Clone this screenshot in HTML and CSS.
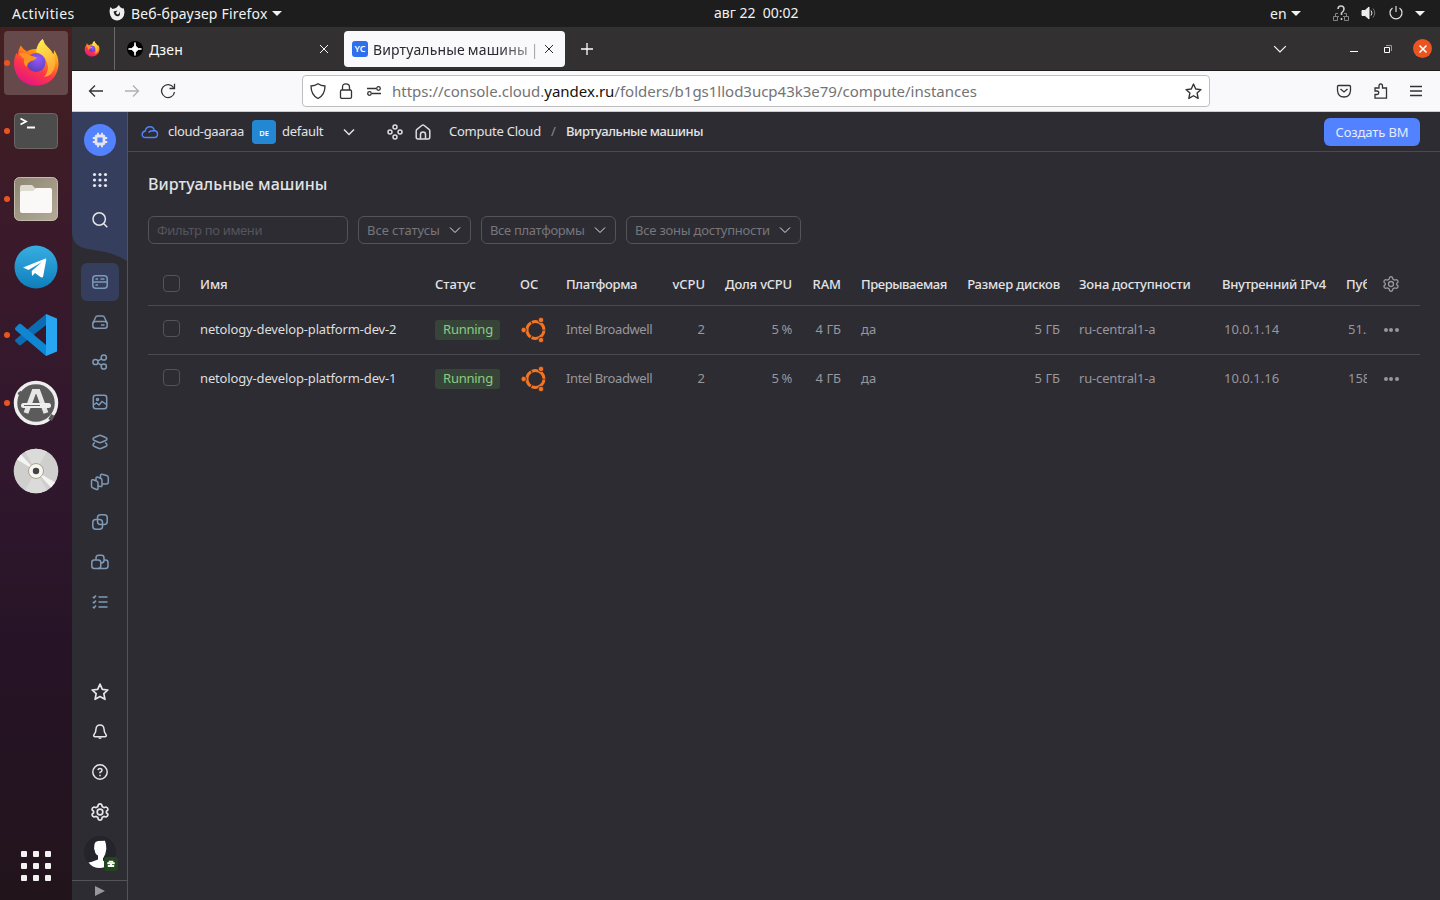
FILE: index.html
```html
<!DOCTYPE html>
<html lang="ru">
<head>
<meta charset="utf-8">
<title>Виртуальные машины</title>
<link rel="stylesheet" href="styles.css">
</head>
<body>
<svg class="defs" width="0" height="0">
  <defs>
    <linearGradient id="ffBody" x1="0.8" y1="0" x2="0.3" y2="1"><stop offset="0" stop-color="#fff44f"/><stop offset=".35" stop-color="#ff980e"/><stop offset=".65" stop-color="#ff3647"/><stop offset="1" stop-color="#e31587"/></linearGradient>
    <linearGradient id="ffFlame" x1="0" y1="0" x2="0.3" y2="1"><stop offset="0" stop-color="#fff44f"/><stop offset="1" stop-color="#ffa436"/></linearGradient>
    <radialGradient id="ffGlobe" cx=".6" cy=".3" r=".8"><stop offset="0" stop-color="#9059ff"/><stop offset="1" stop-color="#5b3cb0"/></radialGradient>
    <linearGradient id="tgFill" x1="0" y1="0" x2="0" y2="1"><stop offset="0" stop-color="#37aee2"/><stop offset="1" stop-color="#0f7ebc"/></linearGradient>
    <linearGradient id="fileFill" x1="0" y1="0" x2="1" y2="1"><stop offset="0" stop-color="#8d8673"/><stop offset="1" stop-color="#b3ab98"/></linearGradient>
  </defs>
  <symbol id="firefox" viewBox="0 0 48 48">
    <path d="M8.700 6.500Q11.500 11 15 12.500Q18 9.500 26 10Q27 3 30.700 0Q32 5 36 8.500Q40 12 40.500 16Q42.500 14 42 11Q46.500 17 46.500 25C46 38 37 46.500 24 46.500C11 46.500 2 36.500 2 24.500Q2 18 5 13.500L5.500 17Q6 11 8.700 6.500Z" fill="url(#ffBody)"/>
    <path d="M24 13Q25 4 30.700 0Q32 5 36 8.500Q45 16 43 27Q41 37 32 38Q38 31 35 24Q34 17 24 13Z" fill="url(#ffFlame)"/>
    <circle cx="24" cy="23.500" r="9.500" fill="url(#ffGlobe)"/>
    <path d="M7 15Q12 12 17 16L25 18.500Q24 21 19 22Q15 24 15 28Q11 26 12 20Z" fill="#ff9322"/>
  </symbol>
  <symbol id="chev" viewBox="0 0 12 12"><path d="M1 3.500L6 8.500L11 3.500" fill="none" stroke="currentColor"/></symbol>
  <symbol id="x" viewBox="0 0 12 12"><path d="M2 2L10 10M10 2L2 10" fill="none" stroke="currentColor"/></symbol>
  <symbol id="star" viewBox="0 0 16 16"><path stroke-linejoin="round" d="M8 1L10.100 5.600L15 6.200L11.400 9.500L12.400 14.500L8 12L3.600 14.500L4.600 9.500L1 6.200L5.900 5.600Z"/></symbol>
  <symbol id="gear" viewBox="0 0 16 16"><circle cx="8" cy="8" r="2.500"/><path d="M6.500 1.500Q8 .1 9.500 1.500L10 3.200L11.600 4.100L13.400 3.600Q15.300 4.200 15 6.100L13.700 7.400V8.700L15 9.900Q15.300 11.700 13.400 12.400L11.600 11.900L10 12.800L9.500 14.500Q8 15.900 6.500 14.500L6 12.800L4.400 11.900L2.600 12.400Q.7 11.700 1 9.900L2.300 8.700V7.400L1 6.100Q.7 4.200 2.600 3.600L4.400 4.100L6 3.200Z"/></symbol>
  <symbol id="ubuntu" viewBox="0 0 26 26"><g fill="none" stroke="#f47421" stroke-width="3"><circle cx="14.500" cy="13" r="8.500" stroke-dasharray="16.800 1" stroke-dashoffset="-.5"/></g><g fill="#f47421" stroke="#2d2c33" stroke-width=".8"><circle cx="20" cy="3" r="2.700"/><circle cx="20" cy="23" r="2.700"/><circle cx="2.700" cy="13" r="2.700"/></g></symbol>
</svg>

<header class="topbar">
  <span class="activities">Activities</span>
  <div class="appmenu">
    <svg width="16" height="16" viewBox="0 0 16 16"><path d="M1.500 2L3.500 4L7 3L10 0L11 2L13.500 3.500L14.500 3Q17 9 13 13.500Q8 17.500 3 13.500Q-1 8 1.500 2Z" fill="#eee"/><path d="M4.500 6.500L8.500 5.500L7 7.500Q7 9.500 9 9.500Q11 8.500 10.200 6.500Q12 9 10 11Q7 12 5.500 9.500Z" fill="#1d1d1d"/></svg>
    <span class="app-name">Веб-браузер Firefox</span><i class="tri"></i>
  </div>
  <span class="clock">авг 22&nbsp; 00:02</span>
  <div class="status">
    <span class="lang">en</span><i class="tri"></i>
    <svg class="net" width="16" height="16" viewBox="0 0 16 16" fill="none" stroke="#858585"><path d="M.5 11.500h4v4h-4zM11.500 11.500h4v4h-4zM2.500 11V8.500H5M13.500 11V8.500H11M6 11.500H4.500M10 11.500H11.500"/><path d="M5 4Q5 1 8 1Q11 1 11 4Q11 6 8.500 8V10M8.500 13v2" stroke="#ccc" stroke-width="1.600"/></svg>
    <svg class="vol" width="16" height="16" viewBox="0 0 16 16" fill="none" stroke="#eee"><path d="M1 5.500H4L8 2V14L4 10.500H1Z" fill="#eee"/><path d="M10 5.500Q12 8 10 10.500"/><path d="M12 3.500Q15.500 8 12 12.500" stroke="#777"/></svg>
    <svg class="pow" width="16" height="16" viewBox="0 0 16 16" fill="none" stroke="#ddd" stroke-width="1.200"><path d="M8 1V7M4.500 3A6 6 0 1 0 11.500 3"/></svg>
    <i class="tri"></i>
  </div>
</header>

<div class="desktop">
  <nav class="dock">
    <div class="app active running"><svg width="48" height="48"><use href="#firefox"/></svg></div>
    <div class="app running"><svg width="48" height="48" viewBox="0 0 48 48"><rect x="2.500" y="6.500" width="43" height="35" rx="4" fill="#4c4c4c" stroke="#6b6668"/><path d="M8.500 11.500L14 14.500L8.500 17.500M15 20.500h8" fill="none" stroke="#fff" stroke-width="1.800"/></svg></div>
    <div class="app running"><svg width="48" height="48" viewBox="0 0 48 48"><rect x="2.500" y="2.500" width="43" height="43" rx="5" fill="url(#fileFill)" stroke="#c2bcac"/><path d="M8 13Q8 10 10 10H20L24 14V22H8Z" fill="#dedbd0"/><path d="M8 18Q8 16 10 16H21L24 13H38Q40 13 40 15V36Q40 38 38 38H10Q8 38 8 36Z" fill="#faf9f7"/></svg></div>
    <div class="app"><svg width="48" height="48" viewBox="0 0 48 48"><circle cx="24" cy="24" r="21.500" fill="url(#tgFill)"/><path d="M11 24.500L33.500 15.600Q34.500 15.500 34.200 17L31.200 33Q30.800 35.400 28.500 34L23 30L20 33L19.700 28L30 19L16.500 27Z" fill="#fff"/></svg></div>
    <div class="app running"><svg width="48" height="48" viewBox="0 0 48 48"><path d="M3 30L7 34Q8 34.500 9 34L34 14V3L4 28Q2.800 29 3 30Z" fill="#0a6db4"/><path d="M3 17L7 13Q8 12.500 9 13L34 34V45L4 19.500Q2.800 18.500 3 17Z" fill="#0f86d2"/><path d="M34 3L45 7.500V40.500L34 45Z" fill="#27a5f3"/></svg></div>
    <div class="app running"><svg width="48" height="48" viewBox="0 0 48 48"><circle cx="24" cy="24" r="20.500" fill="#5b5b5b" stroke="#eee" stroke-width="3.500"/><path d="M7 13L10 17M38 41L41 36" stroke="#5b5b5b" stroke-width="4"/><path d="M14 34L22 12.500H26L34 34" fill="none" stroke="#e6e6e6" stroke-width="5"/><path d="M11.500 26.500H36.500" stroke="#eee" stroke-width="5" stroke-linecap="round"/><path d="M12 26.500H28" stroke="#92449a"/></svg></div>
    <div class="app"><svg width="48" height="48" viewBox="0 0 48 48"><circle cx="24" cy="24" r="22.300" fill="#cfcfcd"/><path d="M24 24L13 4.500Q24-1 35 4.500ZM24 24L35 43.500Q24 49 13 43.500Z" fill="#dbdbda"/><path d="M24 24L5 12.500L9 7.500ZM24 24L43 35.500L39 40.500Z" fill="#f4f4f3"/><circle cx="24" cy="24" r="7.500" fill="#f6f5f1" stroke="#aaa38d"/><circle cx="24" cy="24" r="3.200" fill="#444"/></svg></div>
    <div class="launcher"><i></i><i></i><i></i><i></i><i></i><i></i><i></i><i></i><i></i></div>
  </nav>

  <main class="browser">
    <div class="tabs">
      <div class="pin"><svg width="16" height="16" viewBox="0 0 48 48"><use href="#firefox"/></svg></div>
      <div class="tab">
        <svg width="16" height="16" viewBox="0 0 16 16"><circle cx="8" cy="8" r="8" fill="#000"/><path d="M8 1.500Q8 8 14.500 8Q8 8 8 14.500Q8 8 1.500 8Q8 8 8 1.500Z" fill="#fff" stroke="#fff"/></svg>
        <span class="tab-title">Дзен</span>
        <svg class="close" width="12" height="12"><use href="#x"/></svg>
      </div>
      <div class="tab current">
        <span class="yc">YC</span>
        <span class="tab-title">Виртуальные машины |</span>
        <svg class="close" width="12" height="12"><use href="#x"/></svg>
      </div>
      <svg class="plus" width="14" height="14" viewBox="0 0 14 14"><path d="M7 1V13M1 7H13" stroke="#fff" stroke-width="1.300"/></svg>
      <svg class="tab-list" width="14" height="14" viewBox="0 0 12 12"><use href="#chev"/></svg>
      <svg class="min" width="10" height="10" viewBox="0 0 10 10"><path d="M1 7.500H9" stroke="#fff"/></svg>
      <svg class="max" width="10" height="10" viewBox="0 0 10 10" fill="none"><path d="M1.500 3.500H6.500V8.500H1.500Z" stroke="#fff"/><path d="M3 1.500H8.500V7" stroke="#999"/></svg>
      <span class="quit"><svg width="12" height="12" viewBox="0 0 12 12"><path d="M2.500 2.500L9.500 9.500M9.500 2.500L2.500 9.500" stroke="#fff" stroke-width="1.600"/></svg></span>
    </div>

    <div class="toolbar">
      <svg class="back" width="16" height="16" viewBox="0 0 16 16"><path d="M15 8H1.500M7 2.500L1.500 8L7 13.500"/></svg>
      <svg class="fwd" width="16" height="16" viewBox="0 0 16 16"><path d="M1 8H14.500M9 2.500L14.500 8L9 13.500"/></svg>
      <svg class="reload" width="16" height="16" viewBox="0 0 16 16"><path d="M13.500 4.500A6.500 6.500 0 1 0 14.500 9M9.500 5.500H14.500V.8"/></svg>
      <div class="urlbar">
        <svg width="16" height="16" viewBox="0 0 16 16"><path d="M8 .8Q11 2.800 15 3Q15 12 8 15.500Q1 12 1 3Q5 2.800 8 .8Z"/></svg>
        <svg width="16" height="16" viewBox="0 0 16 16"><rect x="2.500" y="7" width="11" height="8.300" rx="1.300"/><path d="M4.500 7V4.200Q4.500.8 8 .8Q11.500.8 11.500 4.200V7"/></svg>
        <svg width="16" height="16" viewBox="0 0 16 16"><circle cx="12.500" cy="5.500" r="1.800"/><circle cx="3.500" cy="10.500" r="1.800"/><path d="M1 5.500H10M6 10.500H15"/></svg>
        <span class="url">https://console.cloud.<b>yandex.ru</b>/folders/b1gs1llod3ucp43k3e79/compute/instances</span>
        <svg class="fav" width="17" height="17" viewBox="0 0 16 16"><use href="#star"/></svg>
      </div>
      <svg class="pocket" width="16" height="16" viewBox="0 0 16 16"><path d="M2.500 2.500H13.500Q14.500 2.500 14.500 3.500V7.500Q14 14 8 14Q2 14 1.500 7.500V3.500Q1.500 2.500 2.500 2.500ZM4.500 6L8 9L11.500 6"/></svg>
      <svg class="puzzle" width="16" height="16" viewBox="0 0 16 16"><path d="M2 5H6V3Q6 .8 7.700 .8Q9.500.8 9.500 3V5H13.500V15.200H2V11.500H4Q5.800 11.500 5.800 9.700Q5.800 8 4 8H2Z"/></svg>
      <svg class="burger" width="14" height="14" viewBox="0 0 14 14"><path d="M1 2.500H13M1 7H13M1 11.500H13"/></svg>
    </div>

    <div class="console">
      <aside class="side">
        <svg class="wave" width="55" height="150" viewBox="0 0 55 150"><path d="M0 0H55V149Q46 143 33 140L16 137Q1 135 0 121Z" fill="#353e5c"/></svg>
        <div class="side-top">
          <div class="chip"><svg width="16" height="16" viewBox="0 0 16 16" fill="none" stroke="#fff"><rect x="4" y="4" width="8" height="8" rx="1" stroke-width="2.800"/><path d="M6 .8V4M10 .8V4M6 12V15.200M10 12V15.200M.8 6H4M.8 10H4M12 6H15.200M12 10H15.200" stroke-width="1.800"/></svg></div>
          <div class="slot"><svg class="solid" width="16" height="16" viewBox="0 0 16 16"><g id="dots"><circle cx="2.500" cy="2.500" r="1.600"/><circle cx="8" cy="2.500" r="1.600"/><circle cx="13.500" cy="2.500" r="1.600"/></g><use href="#dots" y="5.500"/><use href="#dots" y="11"/></svg></div>
          <div class="slot"><svg width="16" height="16" viewBox="0 0 16 16"><circle cx="7.200" cy="7" r="6.200"/><path d="M11.500 11.500L15.300 15.300"/></svg></div>
        </div>
        <div class="side-nav">
          <div class="slot on"><svg width="16" height="16" viewBox="0 0 16 16"><rect x=".8" y="1.700" width="14.400" height="12.600" rx="3"/><path d="M1 8H15M3.500 5H6M8.500 5H12.500M3.500 11H6"/></svg></div>
          <div class="slot"><svg width="16" height="16" viewBox="0 0 16 16"><path d="M1 9L3.500 3.500Q4 2 5.500 2H10.500Q12 2 12.500 3.500L15 9"/><rect x=".8" y="7.500" width="14.400" height="6.700" rx="2.500"/><path d="M9 11H12.500"/></svg></div>
          <div class="slot"><svg width="16" height="16" viewBox="0 0 16 16"><circle cx="3.500" cy="8" r="2.600"/><circle cx="11.800" cy="3.500" r="2.600"/><circle cx="11.800" cy="12.500" r="2.600"/><path d="M6 6.800L9.500 4.800M6 9.200L9.500 11.200"/></svg></div>
          <div class="slot"><svg width="16" height="16" viewBox="0 0 16 16"><rect x="1.300" y="1.300" width="13.400" height="13.400" rx="2.500"/><circle cx="5.500" cy="5.500" r="1"/><path d="M1.500 11L4.500 9L7 11L10 7.500L14.500 10.500"/></svg></div>
          <div class="slot"><svg width="16" height="16" viewBox="0 0 16 16"><path d="M1 5Q1 4 3 3.200L6.500 1.700Q8 1 9.500 1.700L13 3.200Q15 4 15 5Q15 6 13 6.800L9.500 8.300Q8 9 6.500 8.300L3 6.800Q1 6 1 5ZM3 8.500Q1 9.500 1 11Q1 12 3 12.800L6.500 14.300Q8 15 9.500 14.300L13 12.800Q15 12 15 11Q15 9.500 13 8.500"/></svg></div>
          <div class="slot"><svg width="20" height="18" viewBox="0 0 20 18"><path d="M1.500 8Q1.500 6.300 3.200 6.800L6.500 8Q8 8.500 8 10V15Q8 17 6.500 16.500L3 15Q1.500 14.500 1.500 13ZM6 7V5.500Q6 3.800 7.500 4L11 5.500Q12 6 12 7.500V12Q12 14 10.500 13.500L8.500 13M10.500 5V3Q10.500 1 12 1.200L16.500 2.500Q18.300 3 18.300 4.500V9Q18.300 11 16.500 11H12.500"/></svg></div>
          <div class="slot"><svg width="16" height="16" viewBox="0 0 16 16"><rect x="5.500" y=".8" width="9.700" height="9.700" rx="3"/><rect x=".8" y="5.500" width="9.700" height="9.700" rx="3"/></svg></div>
          <div class="slot"><svg width="18" height="16" viewBox="0 0 18 16"><rect x=".8" y="6" width="9" height="8.500" rx="2.500"/><path d="M5 6V4Q5 1.300 7.500 1.300H10.500Q13 1.300 13 4V6.500Q13 9 10 9M13 6H14.500Q17 6 17 8.500V12Q17 14.500 14.500 14.500H7"/></svg></div>
          <div class="slot"><svg width="16" height="16" viewBox="0 0 16 16"><path d="M6.500 3H15.500M6.500 8H15.500M6.500 13H15.500M.8 2.800L2 4L4 1.500M.8 7.800L2 9L4 6.500M.8 12.800L2 14L4 11.500"/></svg></div>
        </div>
        <div class="side-foot">
          <div class="slot"><svg width="18" height="18" viewBox="0 0 16 16"><use href="#star"/></svg></div>
          <div class="slot"><svg width="16" height="16" viewBox="0 0 16 16"><path d="M4 5Q4.300 1 8 1Q11.700 1 12 5L12.500 8L14.300 11.200Q14.500 12.700 13 12.700H3Q1.500 12.700 1.700 11.200L3.500 8Z"/><path d="M6 13.500Q8 16.500 10 13.500Z" fill="#e6e6e8" stroke="none"/></svg></div>
          <div class="slot"><svg width="16" height="16" viewBox="0 0 16 16"><circle cx="8" cy="8" r="7.200"/><path d="M6 6.200Q6.200 4.500 8 4.500Q10 4.500 10 6.300Q10 7.300 8 8.500V9.200M8 10.700V12.200"/></svg></div>
          <div class="slot"><svg width="18" height="18" viewBox="0 0 16 16"><use href="#gear"/></svg></div>
          <div class="avatar"><svg width="32" height="32" viewBox="0 0 32 32"><circle cx="16" cy="16" r="16" fill="#25242b"/><path d="M10.500 8Q11 5.500 14 5L21 4.800L22 8.500L22.300 13Q22 18 19 22.500V24.500Q21 27 25 28Q21 32 16 32Q8.500 32 4.500 26.500Q8 26 14 23.500V19.500Q11 18 10.800 14.500Q9.700 13 10.200 11Z" fill="#fff"/></svg><span class="badge"><svg width="8" height="8" viewBox="0 0 8 8"><path d="M2.500 2.500V1.500H5.500V2.500" fill="none" stroke="#fff"/><path d="M.3 2.300H7.700V4.300H5V5H7.200V7H.8V5H3V4.300H.3Z" fill="#fff"/></svg></span></div>
        </div>
        <div class="expand"><i></i></div>
      </aside>

      <section class="page">
        <div class="crumbs">
          <svg class="cloud" width="18" height="16" viewBox="0 0 18 16"><path d="M4.500 13.500Q1.200 13.500 1.200 10.300Q1.200 7.700 4.200 7Q5 2.800 9 2.800Q12.500 2.800 13.300 6.500Q16.500 7 16.500 10Q16.500 13.500 13.500 13.500ZM7.500 8.500Q9.500 6 13.300 7"/></svg>
          <span class="cr-cloud">cloud-gaaraa</span>
          <span class="de">DE</span>
          <span class="cr-def">default</span>
          <svg class="cr-chev" width="12" height="12" viewBox="0 0 12 12"><use href="#chev"/></svg>
          <svg class="cr-dots" width="16" height="16" viewBox="0 0 16 16"><circle cx="8" cy="3" r="2"/><circle cx="8" cy="13" r="2"/><circle cx="3" cy="8" r="2"/><circle cx="13" cy="8" r="2"/></svg>
          <svg class="cr-home" width="16" height="16" viewBox="0 0 16 16"><path d="M1.200 7Q1.200 6 2 5.300L6.800 1.500Q8 .7 9.200 1.500L14 5.300Q14.800 6 14.800 7V13Q14.800 15 13 15H3Q1.200 15 1.200 13ZM5.500 15V10.500Q5.500 8 8 8Q10.500 8 10.500 10.500V15"/></svg>
          <span class="cr-comp">Compute Cloud</span>
          <span class="cr-sep">/</span>
          <span class="cr-vm">Виртуальные машины</span>
          <button class="create">Создать ВМ</button>
        </div>

        <div class="content">
          <h1>Виртуальные машины</h1>
          <div class="filters">
            <div class="input">Фильтр по имени</div>
            <div class="select s1"><span>Все статусы</span><svg width="12" height="12"><use href="#chev"/></svg></div>
            <div class="select s2"><span>Все платформы</span><svg width="12" height="12"><use href="#chev"/></svg></div>
            <div class="select s3"><span>Все зоны доступности</span><svg width="12" height="12"><use href="#chev"/></svg></div>
          </div>

          <div class="table">
            <div class="row head">
              <div class="c-box"><i></i></div><div>Имя</div><div>Статус</div><div>ОС</div><div class="h-plat">Платформа</div><div class="r">vCPU</div><div class="r h-share">Доля vCPU</div><div class="r">RAM</div><div class="pl h-pre">Прерываемая</div><div class="r h-share">Размер дисков</div><div class="pl2 h-zone">Зона доступности</div><div class="h-ip">Внутренний IPv4</div><div class="clip">Пуб</div><div class="act"><svg width="16" height="16" viewBox="0 0 16 16"><use href="#gear"/></svg></div>
            </div>
            <div class="row">
              <div class="c-box"><i></i></div><div class="name">netology-develop-platform-dev-2</div><div class="st"><span class="run">Running</span></div><div class="st"><svg class="os" width="26" height="26"><use href="#ubuntu"/></svg></div><div class="plat">Intel Broadwell</div><div class="r">2</div><div class="r tight">5 %</div><div class="r">4 ГБ</div><div class="pl">да</div><div class="r">5 ГБ</div><div class="pl2 zone">ru-central1-a</div><div class="ip">10.0.1.14</div><div class="clip num">51.2</div><div class="act"><b></b><b></b><b></b></div>
            </div>
            <div class="row">
              <div class="c-box"><i></i></div><div class="name">netology-develop-platform-dev-1</div><div class="st"><span class="run">Running</span></div><div class="st"><svg class="os" width="26" height="26"><use href="#ubuntu"/></svg></div><div class="plat">Intel Broadwell</div><div class="r">2</div><div class="r tight">5 %</div><div class="r">4 ГБ</div><div class="pl">да</div><div class="r">5 ГБ</div><div class="pl2 zone">ru-central1-a</div><div class="ip">10.0.1.16</div><div class="clip num">158</div><div class="act"><b></b><b></b><b></b></div>
            </div>
          </div>
        </div>
      </section>
    </div>
  </main>
</div>
</body>
</html>
```

FILE: styles.css
```css
* { box-sizing: border-box; }
body { margin: 0; width: 1440px; height: 900px; overflow: hidden; font-family: "Noto Sans", "Open Sans", sans-serif; font-size: 13px; background: #2d2c33; color: #e3e3e5; display: flex; flex-direction: column; }
svg { display: block; flex: none; }
span { white-space: nowrap; }
.defs { width: 0; height: 0; position: absolute; }

.topbar { height: 27px; flex: none; background: #1d1d1d; color: #f2f2f2; display: flex; align-items: center; font-size: 14px; }
.activities { margin-left: 12px; width: 97px; letter-spacing: .43px; }
.appmenu { display: flex; align-items: center; width: 605px; }
.appmenu svg { margin-top: -2px; }
.app-name { margin-left: 6px; width: 137px; letter-spacing: .2px; }
.tri { width: 0; height: 0; border: 5px solid transparent; border-top-color: #f2f2f2; border-bottom: 0; margin-left: 4px; flex: none; }
.clock { width: 556px; line-height: 25px; padding-bottom: 2px; }
.status { display: flex; align-items: center; }
.status svg { margin-top: -1px; }
.lang { width: 17px; }
.status .net { margin-left: 32px; }
.status .vol { margin-left: 12px; }
.status .pow { margin-left: 11px; margin-top: -2px; }
.pow + .tri { margin-left: 11px; }

.desktop { flex: 1; display: flex; min-height: 0; }
.dock { width: 72px; flex: none; padding: 4px; display: flex; flex-direction: column; gap: 4px; background: linear-gradient(#44201f, #3b1a2a 22%, #30172d 50%, #261326 73%, #22141b); }
.app { width: 64px; height: 64px; border-radius: 4px; display: flex; align-items: center; justify-content: center; position: relative; flex: none; }
.app.active { background: #664a4b; }
.app.running::before { content: ""; position: absolute; left: 0; top: 29px; width: 6px; height: 6px; border-radius: 50%; background: #e95420; }
.launcher { margin: auto auto 15px; display: grid; grid-template-columns: repeat(3, 6px); gap: 6px; }
.launcher i { width: 6px; height: 6px; border-radius: 1px; background: #f2f2f0; }

.browser { flex: 1; min-width: 0; display: flex; flex-direction: column; }
.tabs { height: 44px; flex: none; background: #323031; border-bottom: 1px solid #1c1b1c; display: flex; align-items: center; color: #fbfbfb; font-size: 14px; }
.pin { width: 43px; height: 43px; border-right: 1px solid #6b6a6b; display: flex; align-items: center; padding-left: 12px; }
.tab { width: 224px; display: flex; align-items: center; padding-left: 12px; }
.tab-title { margin-left: 6px; flex: 1; overflow: hidden; padding-top: 2px; letter-spacing: .15px; }
.tab .close { margin-right: 9px; }
.tab.current { margin-left: 5px; width: 221px; height: 36px; border-radius: 4px; background: #f9f9fb; color: #2b2a33; padding-left: 8px; }
.tab.current .close { margin-right: 10px; }
.tab.current .tab-title { margin-left: 5px; margin-right: 4px; word-spacing: -.8px; -webkit-mask-image: linear-gradient(90deg, #000 75%, rgba(0,0,0,.35)); }
.yc { width: 16px; height: 16px; border-radius: 3px; background: #2f6fed; color: #fff; font-size: 9px; line-height: 16px; text-align: center; font-weight: 600; }
.plus { margin-left: 15px; }
.tab-list { margin-left: 679px; }
.min { margin-left: 62px; }
.max { margin-left: 24px; }
.quit { margin-left: 20px; width: 19px; height: 19px; border-radius: 50%; background: #e95420; display: flex; align-items: center; justify-content: center; }

.toolbar { height: 41px; flex: none; background: #f9f9fb; border-bottom: 1px solid #ccc; display: flex; align-items: center; padding-left: 16px; color: #333; }
.toolbar svg { fill: none; stroke: #333; stroke-width: 1.300; }
.toolbar .fwd { margin-left: 20px; stroke: #b0b0b1; }
.reload { margin-left: 20px; }
.urlbar { margin-left: 126px; width: 908px; height: 32px; border: 1px solid #bfbfc0; border-radius: 4px; background: #fff; display: flex; align-items: center; gap: 12px; padding: 0 7px; font-size: 15px; color: #737376; }
.urlbar .url { margin-left: -2px; flex: 1; letter-spacing: -.01px; }
.url b { font-weight: 400; color: #111; }
.pocket { margin-left: 126px; }
.puzzle { margin-left: 21px; }
.burger { margin-left: 20px; }

.console { flex: 1; min-height: 0; display: flex; }
.side { width: 56px; flex: none; border-right: 1px solid #54535a; display: flex; flex-direction: column; position: relative; }
.side svg { fill: none; stroke: #e6e6e8; stroke-width: 1.500; }
.side .wave { position: absolute; left: 0; top: 0; stroke: none; }
.side-top { position: relative; padding-top: 12px; display: flex; flex-direction: column; align-items: center; height: 151px; }
.chip { width: 32px; height: 32px; border-radius: 50%; background: #5282ff; display: flex; align-items: center; justify-content: center; margin-bottom: 5px; }
.slot { width: 38px; height: 38px; margin-bottom: 2px; border-radius: 6px; display: flex; align-items: center; justify-content: center; flex: none; }
.side .solid { fill: #e6e7ec; stroke: none; }
.slot.on { background: #353e5c; }
.side-nav { display: flex; flex-direction: column; align-items: center; }
.side .side-nav svg { stroke: #7d9ab8; stroke-width: 1.500; }
.side-foot { margin-top: auto; display: flex; flex-direction: column; align-items: center; padding-bottom: 12px; }
.avatar { position: relative; width: 32px; height: 32px; margin-top: 3px; }
.side .avatar svg { stroke: none; }
.badge { position: absolute; left: 20px; top: 21px; width: 14px; height: 14px; border-radius: 3px; background: #22461e; display: flex; align-items: center; justify-content: center; }
.expand { height: 20px; flex: none; border-top: 1px solid #54535a; display: flex; align-items: center; justify-content: center; }
.expand i { border: 5px solid transparent; border-left: 10px solid #98979c; border-right: 0; }

.page { flex: 1; min-width: 0; }
.crumbs { height: 40px; border-bottom: 1px solid #4b4a51; display: flex; align-items: center; padding-left: 13px; }
.crumbs svg { fill: none; stroke: #dedee0; stroke-width: 1.500; }
.crumbs .cloud { stroke: #5282ff; stroke-width: 1.400; }
.crumbs span { margin-top: -1px; }
.crumbs .cr-cloud { margin-left: 9px; width: 84px; letter-spacing: -.33px; }
.crumbs .de { margin-top: 0; width: 24px; height: 24px; border-radius: 4px; background: #2387d3; color: #fff; font-size: 7.500px; line-height: 27px; text-align: center; font-weight: 600; }
.crumbs .cr-def { margin-left: 6px; width: 61px; letter-spacing: -.3px; }
.cr-dots { margin-left: 32px; }
.cr-home { margin-left: 12px; }
.crumbs .cr-comp { margin-left: 18px; width: 102px; letter-spacing: -.25px; }
.cr-sep { width: 15px; color: #8b8a8f; }
.cr-vm { font-weight: 500; letter-spacing: -.45px; }
.create { margin: 0 20px 0 auto; width: 96px; height: 28px; border: 0; border-radius: 6px; background: #5282ff; color: #e5ecff; font: inherit; letter-spacing: -.1px; padding: 0; }

.content { padding: 20px 20px 0; }
h1 { margin: 0; font-size: 16px; line-height: 24px; font-weight: 500; white-space: nowrap; letter-spacing: .04px; }
.filters { margin-top: 20px; display: flex; gap: 10px; }
.input, .select { height: 28px; border: 1px solid #54535a; border-radius: 6px; line-height: 26px; padding-left: 8px; color: #56555c; }
.input { width: 200px; letter-spacing: -.33px; }
.select { display: flex; align-items: center; justify-content: space-between; padding-right: 9px; color: #77767b; }
.select svg { color: #e6e6e8; }
.s1 { width: 113px; letter-spacing: -.05px; }
.s2 { width: 135px; letter-spacing: -.33px; }
.s3 { width: 175px; letter-spacing: -.22px; }

.table { margin-top: 19px; }
.row { display: grid; grid-template-columns: 52px 235px 85px 46px 95px 44px 87px 49px 106px 113px 162px 124px 21px 53px; height: 49px; padding-bottom: 2px; align-items: center; color: #98979b; white-space: nowrap; border-bottom: 1px solid #4b4a51; }
.row:last-child { border-bottom-color: transparent; }
.row.head { height: 43px; padding-bottom: 0; color: #e3e3e5; font-weight: 500; letter-spacing: -.05px; }
.c-box { padding-left: 15px; }
.c-box i { display: block; width: 17px; height: 17px; border: 1px solid #54535a; border-radius: 4px; margin-top: -2px; }
.row:not(.head) .c-box i { margin-top: -1px; }
.name { color: #dededf; letter-spacing: -.15px; }
.plat { letter-spacing: -.4px; }
.zone { letter-spacing: -.17px; }
.tight { letter-spacing: -.4px; }
.h-plat { letter-spacing: -.33px; }
.h-share { letter-spacing: -.2px; }
.h-pre { letter-spacing: -.42px; }
.h-zone { letter-spacing: -.2px; }
.h-ip { letter-spacing: -.28px; }
.st { padding-top: 1px; }
.run { display: block; width: 65px; height: 20px; border-radius: 3px; background: #374539; color: #8ccb83; line-height: 19px; text-align: center; letter-spacing: -.25px; padding-left: 1px; }
.os { margin-left: 1px; }
.row > .r { justify-self: end; }
.pl { padding-left: 20px; }
.pl2 { padding-left: 19px; }
.ip { padding-left: 2px; }
.clip { overflow: hidden; }
.num { padding-left: 2px; }
.act { display: flex; align-items: center; gap: 2px; padding-left: 16px; }
.act svg { fill: none; stroke: #98979b; stroke-width: 1.300; }
.act b { width: 4px; height: 4px; border-radius: 50%; background: #98979b; margin-top: 1px; }
.act b + b { margin-left: -.5px; }
.act b:first-child { margin-left: .5px; }
```
